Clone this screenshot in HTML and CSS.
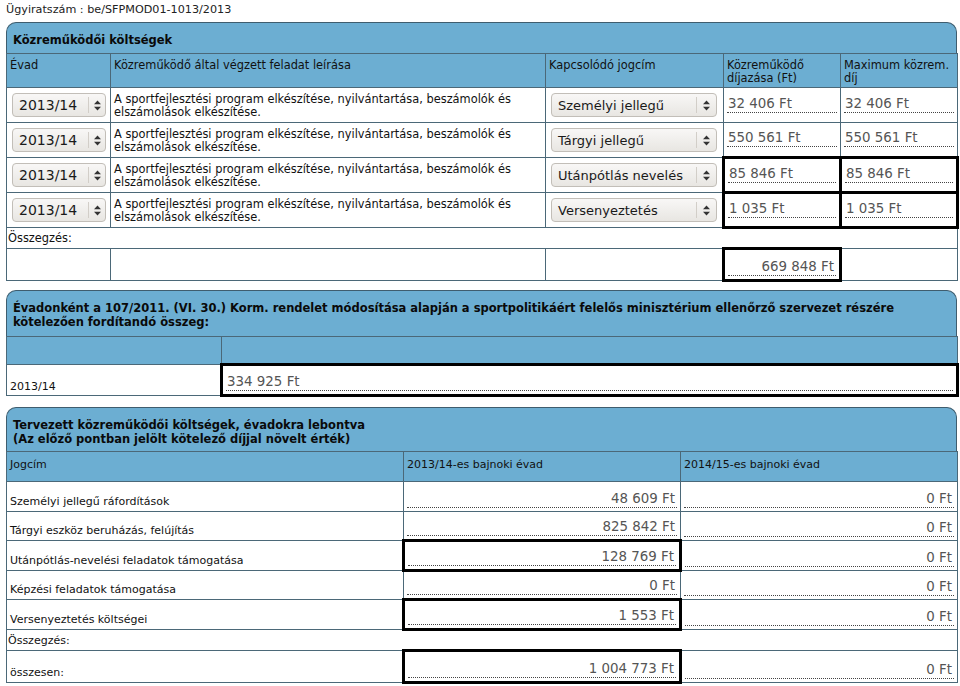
FILE: index.html
```html
<!DOCTYPE html>
<html lang="hu">
<head>
<meta charset="utf-8">
<title>Közreműködői költségek</title>
<link rel="stylesheet" href="styles.css">
</head>
<body>
<div class="page">
  <div class="docno">Ügyiratszám : be/SFPMOD01-1013/2013</div>

  <section class="panel first">
    <div class="ptitle t1">Közreműködői költségek</div>
    <table class="grid g1">
      <colgroup><col class="c1"><col class="c2"><col class="c3"><col class="c4"><col class="c5"></colgroup>
      <tr class="head">
        <th>Évad</th>
        <th>Közreműködő által végzett feladat leírása</th>
        <th>Kapcsolódó jogcím</th>
        <th>Közreműködő díjazása (Ft)</th>
        <th>Maximum közrem. díj</th>
      </tr>
      <tr class="row">
        <td><div class="sel sel-evad"><span class="stxt">2013/14</span><span class="sarr"><svg width="7" height="11" viewBox="0 0 7 11"><path d="M0 4.2L3.5 0.5L7 4.2Z M0 6.8L3.5 10.5L7 6.8Z" fill="#333"/></svg></span></div></td>
        <td class="desc">A sportfejlesztési program elkészítése, nyilvántartása, beszámolók és elszámolások elkészítése.</td>
        <td><div class="sel sel-jog"><span class="stxt">Személyi jellegű</span><span class="sarr"><svg width="7" height="11" viewBox="0 0 7 11"><path d="M0 4.2L3.5 0.5L7 4.2Z M0 6.8L3.5 10.5L7 6.8Z" fill="#333"/></svg></span></div></td>
        <td class="vc"><span class="val">32 406 Ft</span></td>
        <td class="vc"><span class="val">32 406 Ft</span></td>
      </tr>
      <tr class="row">
        <td><div class="sel sel-evad"><span class="stxt">2013/14</span><span class="sarr"><svg width="7" height="11" viewBox="0 0 7 11"><path d="M0 4.2L3.5 0.5L7 4.2Z M0 6.8L3.5 10.5L7 6.8Z" fill="#333"/></svg></span></div></td>
        <td class="desc">A sportfejlesztési program elkészítése, nyilvántartása, beszámolók és elszámolások elkészítése.</td>
        <td><div class="sel sel-jog"><span class="stxt">Tárgyi jellegű</span><span class="sarr"><svg width="7" height="11" viewBox="0 0 7 11"><path d="M0 4.2L3.5 0.5L7 4.2Z M0 6.8L3.5 10.5L7 6.8Z" fill="#333"/></svg></span></div></td>
        <td class="vc"><span class="val">550 561 Ft</span></td>
        <td class="vc"><span class="val">550 561 Ft</span></td>
      </tr>
      <tr class="row">
        <td><div class="sel sel-evad"><span class="stxt">2013/14</span><span class="sarr"><svg width="7" height="11" viewBox="0 0 7 11"><path d="M0 4.2L3.5 0.5L7 4.2Z M0 6.8L3.5 10.5L7 6.8Z" fill="#333"/></svg></span></div></td>
        <td class="desc">A sportfejlesztési program elkészítése, nyilvántartása, beszámolók és elszámolások elkészítése.</td>
        <td><div class="sel sel-jog"><span class="stxt">Utánpótlás nevelés</span><span class="sarr"><svg width="7" height="11" viewBox="0 0 7 11"><path d="M0 4.2L3.5 0.5L7 4.2Z M0 6.8L3.5 10.5L7 6.8Z" fill="#333"/></svg></span></div></td>
        <td class="vc thick"><span class="val">85 846 Ft</span></td>
        <td class="vc thick"><span class="val">85 846 Ft</span></td>
      </tr>
      <tr class="row">
        <td><div class="sel sel-evad"><span class="stxt">2013/14</span><span class="sarr"><svg width="7" height="11" viewBox="0 0 7 11"><path d="M0 4.2L3.5 0.5L7 4.2Z M0 6.8L3.5 10.5L7 6.8Z" fill="#333"/></svg></span></div></td>
        <td class="desc">A sportfejlesztési program elkészítése, nyilvántartása, beszámolók és elszámolások elkészítése.</td>
        <td><div class="sel sel-jog"><span class="stxt">Versenyeztetés</span><span class="sarr"><svg width="7" height="11" viewBox="0 0 7 11"><path d="M0 4.2L3.5 0.5L7 4.2Z M0 6.8L3.5 10.5L7 6.8Z" fill="#333"/></svg></span></div></td>
        <td class="vc thick"><span class="val">1 035 Ft</span></td>
        <td class="vc thick"><span class="val">1 035 Ft</span></td>
      </tr>
      <tr class="sumlabel"><td colspan="5">Összegzés:</td></tr>
      <tr class="sumrow">
        <td></td><td></td><td></td>
        <td class="vc thick"><span class="val right">669 848 Ft</span></td>
        <td></td>
      </tr>
    </table>
  </section>

  <section class="panel">
    <div class="ptitle t2">Évadonként a 107/2011. (VI. 30.) Korm. rendelet módosítása alapján a sportpolitikáért felelős minisztérium ellenőrző szervezet részére<br>kötelezően fordítandó összeg:</div>
    <table class="grid g2">
      <colgroup><col class="d1"><col class="d2"></colgroup>
      <tr class="head2"><th></th><th></th></tr>
      <tr class="row2">
        <td class="lbl small">2013/14</td>
        <td class="vc thick"><span class="val">334 925 Ft</span></td>
      </tr>
    </table>
  </section>

  <section class="panel">
    <div class="ptitle t3">Tervezett közreműködői költségek, évadokra lebontva<br>(Az előző pontban jelölt kötelező díjjal növelt érték)</div>
    <table class="grid g3">
      <colgroup><col class="e1"><col class="e2"><col class="e3"></colgroup>
      <tr class="head3"><th>Jogcím</th><th>2013/14-es bajnoki évad</th><th>2014/15-es bajnoki évad</th></tr>
      <tr class="row3">
        <td class="lbl">Személyi jellegű ráfordítások</td>
        <td class="vc"><span class="val right">48 609 Ft</span></td>
        <td class="vc"><span class="val right">0 Ft</span></td>
      </tr>
      <tr class="row3">
        <td class="lbl">Tárgyi eszköz beruházás, felújítás</td>
        <td class="vc"><span class="val right">825 842 Ft</span></td>
        <td class="vc"><span class="val right">0 Ft</span></td>
      </tr>
      <tr class="row3">
        <td class="lbl">Utánpótlás-nevelési feladatok támogatása</td>
        <td class="vc thick"><span class="val right">128 769 Ft</span></td>
        <td class="vc"><span class="val right">0 Ft</span></td>
      </tr>
      <tr class="row3">
        <td class="lbl">Képzési feladatok támogatása</td>
        <td class="vc"><span class="val right">0 Ft</span></td>
        <td class="vc"><span class="val right">0 Ft</span></td>
      </tr>
      <tr class="row3">
        <td class="lbl">Versenyeztetés költségei</td>
        <td class="vc thick"><span class="val right">1 553 Ft</span></td>
        <td class="vc"><span class="val right">0 Ft</span></td>
      </tr>
      <tr class="sumlabel3"><td colspan="3">Összegzés:</td></tr>
      <tr class="row3 total">
        <td class="lbl">összesen:</td>
        <td class="vc thick"><span class="val right">1 004 773 Ft</span></td>
        <td class="vc"><span class="val right">0 Ft</span></td>
      </tr>
    </table>
  </section>
</div>
</body>
</html>
```

FILE: styles.css
```css
* { box-sizing: border-box; }

body {
  margin: 0;
  background: #fff;
  color: #111;
  font-family: "DejaVu Sans", "Liberation Sans", sans-serif;
}

.page {
  padding: 3px 3px 0 6px;
}

.docno {
  font-size: 11.2px;
  line-height: 14px;
  height: 19px;
  color: #222;
}

.panel {
  margin-bottom: 10px;
}

.panel.first {
  margin-bottom: 8px;
}

.ptitle {
  border: 1px solid #3f5d6e;
  border-bottom: 0;
  border-radius: 10px 10px 0 0;
  background: #6caed2;
  font-weight: bold;
  font-size: 11.5px;
  line-height: 14px;
  color: #0a0a0a;
  padding: 0 6px;
}

.t1 {
  height: 31px;
  padding-top: 10px;
}

.t2 {
  height: 46px;
  padding-top: 10px;
}

.t3 {
  height: 44px;
  padding-top: 10px;
}

.grid {
  width: 100%;
  border-collapse: collapse;
  table-layout: fixed;
}

.grid th,
.grid td {
  border: 1px solid #4b6878;
  padding: 0 3px;
  font-weight: normal;
  text-align: left;
}

.grid th {
  background: #6caed2;
  vertical-align: top;
  font-size: 11.4px;
  line-height: 13px;
  color: #111;
}

.grid td {
  background: #fff;
}

/* table 1 */
.c1 { width: 104px; }
.c2 { width: 435px; }
.c3 { width: 178px; }
.c4 { width: 117px; }
.c5 { width: 117px; }

.g1 .head th {
  height: 34px;
  padding-top: 5px;
}

.g1 .row td {
  height: 35px;
  vertical-align: middle;
}

.desc {
  font-size: 11.4px;
  line-height: 13.5px;
  padding-top: 2px !important;
}

.sel {
  display: flex;
  align-items: center;
  height: 24px;
  margin-left: 2px;
  border: 1px solid #c2beb8;
  border-radius: 4px;
  background: linear-gradient(#f8f7f6, #e8e6e2);
  color: #1a1a1a;
}

.stxt {
  flex: 1;
  padding-left: 6px;
  white-space: nowrap;
}

.sarr {
  display: flex;
  align-items: center;
  justify-content: center;
  height: 16px;
  border-left: 1px solid #d2cec8;
}

.sel-evad {
  width: 94px;
  font-size: 14px;
}

.sel-evad .sarr { width: 17px; }

.sel-jog {
  width: 166px;
  font-size: 13px;
}

.sel-jog .sarr { width: 20px; }

.vc {
  vertical-align: bottom;
  padding-bottom: 3px !important;
}

.val {
  display: block;
  color: #555;
  font-size: 13.4px;
  line-height: 17px;
  border-bottom: 1px dotted #444;
  white-space: nowrap;
  padding: 0 1px;
}

.val.right {
  text-align: right;
  padding-right: 2px;
}

.grid td.thick {
  border: 3px solid #000;
}

.sumlabel td,
.sumlabel3 td {
  font-size: 11.4px;
  line-height: 13px;
  padding: 2px 1px 2px;
  vertical-align: bottom;
}

.sumlabel td { height: 21px; }

.sumrow td { height: 32px; }

/* table 2 */
.d1 { width: 215px; }
.d2 { width: 736px; }

.head2 th { height: 28px; }

.row2 td { height: 31px; }

.lbl {
  vertical-align: bottom;
  font-size: 11px;
  line-height: 13px;
  padding-bottom: 3px !important;
}

.small {
  padding-bottom: 2px !important;
}

/* table 3 */
.e1 { width: 397px; }
.e2 { width: 277px; }
.e3 { width: 277px; }

.head3 th {
  height: 30px;
  padding-top: 6px;
  font-size: 11px;
}

.row3 td { height: 29.5px; }

.sumlabel3 td { height: 21px; font-size: 11px; }

.row3.total td { height: 32px; }
```
